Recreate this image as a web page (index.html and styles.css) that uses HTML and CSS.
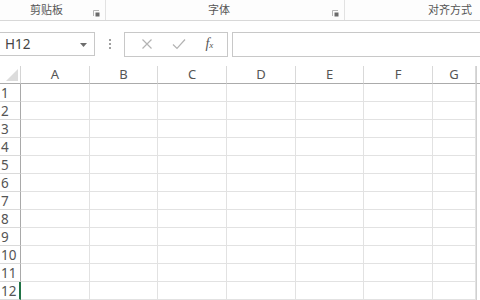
FILE: index.html
```html
<!DOCTYPE html>
<html lang="zh-CN">
<head>
    <meta charset="UTF-8">
    <title>Excel</title>
    <link rel="stylesheet" href="styles.css">
</head>
<body>
    <div class="ribbon">
        <div class="group group-clip">
            <span class="group-label">剪贴板</span>
            <svg class="launcher" width="7" height="7" viewBox="0 0 7 7"><path d="M0.5 6V0.5H6" fill="none" stroke="#b5b5b5"/><rect x="2.5" y="2.5" width="4" height="4" fill="#6b6b6b"/></svg>
        </div>
        <div class="group group-font">
            <span class="group-label">字体</span>
            <svg class="launcher" width="7" height="7" viewBox="0 0 7 7"><path d="M0.5 6V0.5H6" fill="none" stroke="#b5b5b5"/><rect x="2.5" y="2.5" width="4" height="4" fill="#6b6b6b"/></svg>
        </div>
        <div class="group group-align">
            <span class="group-label">对齐方式</span>
        </div>
    </div>

    <div class="formula-bar">
        <div class="name-box">
            <span>H12</span>
            <svg width="8" height="4" viewBox="0 0 8 4"><path d="M0 0H7L3.5 4Z" fill="#6d6d6d"/></svg>
        </div>
        <div class="grip"><i></i><i></i><i></i></div>
        <div class="fx-box">
            <svg width="12" height="12" viewBox="0 0 12 12"><path d="M1.5 1.5L10.5 10.5M10.5 1.5L1.5 10.5" stroke="#b3b3b3" stroke-width="1.2"/></svg>
            <svg width="14" height="12" viewBox="0 0 14 12"><path d="M1 6.5L5 10.5L13 1.5" fill="none" stroke="#b3b3b3" stroke-width="1.2"/></svg>
            <span class="fx">f<small>x</small></span>
        </div>
        <div class="formula-input"></div>
    </div>

    <div class="sheet" id="sheet"></div>

    <script>
        const sheet = document.getElementById('sheet');
        const cols = ['A', 'B', 'C', 'D', 'E', 'F', 'G'];

        let html = '<div class="corner"><span class="tri"></span></div>';
        cols.forEach(c => { html += `<div class="col-head">${c}</div>`; });
        html += '<div class="edge head-edge"></div>';

        for (let r = 1; r <= 12; r++) {
            const active = r === 12 ? ' active' : '';
            html += `<div class="row-head${active}">${r}</div>`;
            cols.forEach(() => { html += '<div class="cell"></div>'; });
            html += '<div class="edge"></div>';
        }
        sheet.innerHTML = html;
    </script>
</body>
</html>
```

FILE: styles.css
```css
body {
    margin: 0;
    width: 480px;
    height: 300px;
    overflow: hidden;
    background: #fff;
    font-family: "Noto Sans", "Noto Sans CJK SC", sans-serif;
    color: #555;
}

.ribbon {
    display: flex;
    height: 20px;
    border-bottom: 1px solid #d8d8d8;
    background: #fdfdfd;
}
.group {
    display: flex;
    align-items: center;
    border-right: 1px solid #e2e2e2;
    box-sizing: border-box;
    padding-right: 5px;
}
.group-clip { width: 106px; }
.group-font { width: 239px; }
.group-align {
    flex: 1;
    border-right: none;
    justify-content: flex-end;
    padding-right: 8px;
}
.group-label {
    flex: 1;
    text-align: center;
    font-size: 11px;
    color: #555;
    line-height: 20px;
}
.group-align .group-label {
    flex: none;
}
.launcher {
    margin-top: 6px;
}

.formula-bar {
    display: flex;
    align-items: center;
    height: 26px;
    margin-top: 10px;
}
.name-box {
    width: 96px;
    height: 24px;
    margin-left: -1px;
    border: 1px solid #c8c8c8;
    display: flex;
    align-items: center;
    justify-content: space-between;
    padding: 0 6px 0 5px;
    box-sizing: border-box;
    font-size: 13.5px;
    color: #444;
}
.name-box svg {
    margin-top: 1px;
}
.grip {
    width: 29px;
    display: flex;
    flex-direction: column;
    align-items: center;
    gap: 2px;
}
.grip i {
    width: 2px;
    height: 2px;
    background: #a0a0a0;
}
.fx-box {
    width: 104px;
    height: 25px;
    border: 1px solid #c8c8c8;
    box-sizing: border-box;
    display: flex;
    align-items: center;
    justify-content: space-around;
    padding: 0 4px 0 6px;
}
.fx {
    font-family: "Liberation Serif", serif;
    font-style: italic;
    font-size: 14px;
    color: #555;
}
.fx small {
    font-size: 9px;
}
.formula-input {
    flex: 1;
    height: 25px;
    margin-left: 4px;
    border: 1px solid #c8c8c8;
    border-right: none;
    box-sizing: border-box;
}

.sheet {
    display: grid;
    grid-template-columns: 21px 69px 68px 69px 69px 68px 69px 43px 1fr;
    grid-auto-rows: 18px;
    margin-top: 9px;
}
.corner {
    border-right: 1px solid #d4d4d4;
    border-bottom: 1px solid #ababab;
    position: relative;
}
.tri {
    position: absolute;
    right: 2px;
    bottom: 2px;
    width: 0;
    height: 0;
    border-left: 12px solid transparent;
    border-bottom: 12px solid #dcdcdc;
}
.col-head {
    border-right: 1px solid #d9d9d9;
    border-bottom: 1px solid #ababab;
    text-align: center;
    font-size: 13px;
    line-height: 17px;
    color: #555;
}
.head-edge {
    border-bottom: 1px solid #ababab;
}
.row-head {
    border-right: 1px solid #a9a9a9;
    border-bottom: 1px solid #dadada;
    font-size: 13.5px;
    line-height: 19px;
    padding-left: 1px;
    color: #555;
}
.row-head.active {
    border-right: 2px solid #217346;
}
.cell {
    border-right: 1px solid #e2e2e2;
    border-bottom: 1px solid #e2e2e2;
}
.edge {
    border-left: 1px solid #d0d0d0;
}
```
